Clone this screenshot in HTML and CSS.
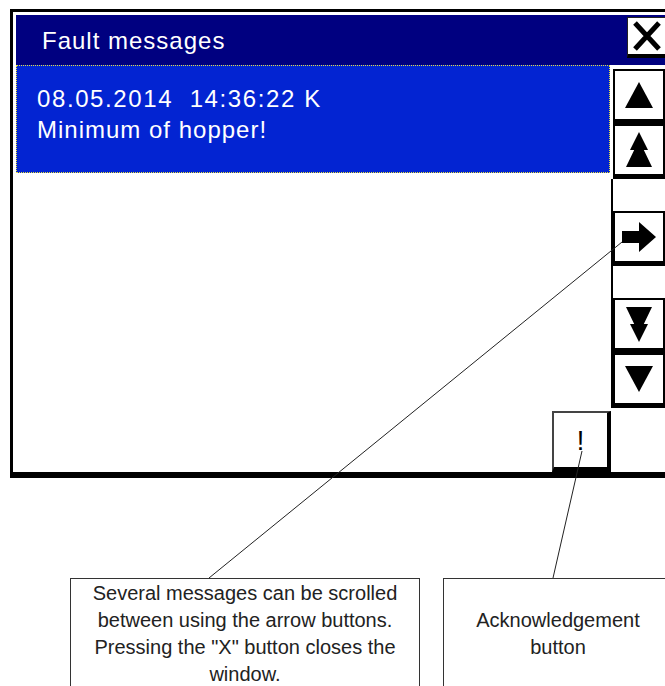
FILE: index.html
```html
<!DOCTYPE html>
<html lang="en">
<head>
    <meta charset="UTF-8">
    <title>Fault messages</title>
    <link rel="stylesheet" href="styles.css">
</head>
<body>
    <div class="screen">
        <div class="titlebar">
            <span class="title">Fault messages</span>
            <div class="close">
                <svg width="28" height="30" viewBox="0 0 28 30"><path d="M2 2 L26 28 M26 2 L2 28" stroke="#000" stroke-width="5" fill="none"/></svg>
            </div>
        </div>
        <div class="panel">
            <div class="list">
                <div class="msg">
                    <div class="stamp">08.05.2014&nbsp;&nbsp;14:36:22 K</div>
                    <div>Minimum of hopper!</div>
                </div>
                <div class="ack">!</div>
            </div>
            <div class="side">
                <!-- page up / scroll up -->
                <div class="key">
                    <svg width="28" height="26" viewBox="0 0 28 26"><path d="M14 0 L28 26 L0 26 Z"/></svg>
                </div>
                <div class="key">
                    <svg width="26" height="36" viewBox="0 0 26 36"><path d="M13 0 L22 18 L4 18 Z M13 8 L26 35 L0 35 Z"/></svg>
                </div>
                <div class="rail">
                    <div class="gap"></div>
                    <div class="key">
                        <svg width="34" height="30" viewBox="0 0 34 30"><path d="M0 9 H18 V21 H0 Z M17 0 L34 15 L17 30 Z"/></svg>
                    </div>
                    <div class="gap"></div>
                    <div class="key">
                        <svg width="26" height="36" viewBox="0 0 26 36"><path d="M13 36 L22 18 L4 18 Z M13 28 L26 1 L0 1 Z"/></svg>
                    </div>
                    <div class="key">
                        <svg width="28" height="26" viewBox="0 0 28 26"><path d="M14 26 L28 0 L0 0 Z"/></svg>
                    </div>
                </div>
            </div>
        </div>
    </div>

    <div class="notes">
        <div class="note note-left">Several messages can be scrolled<br>between using the arrow buttons.<br>Pressing the "X" button closes the<br>window.</div>
        <div class="note note-right"><div>Acknowledgement<br>button</div></div>
    </div>

    <!-- leader lines from the notes to the buttons -->
    <svg class="leaders" width="665" height="686" viewBox="0 0 665 686">
        <line x1="622" y1="242" x2="209" y2="578" stroke="#222" stroke-width="1"/>
        <line x1="582" y1="451" x2="553" y2="578" stroke="#222" stroke-width="1"/>
    </svg>
</body>
</html>
```

FILE: styles.css
```css
/* HMI window mock-up */
body {
    margin: 0;
    height: 686px;
    overflow: hidden;
    position: relative;
    background: #fff;
    font-family: "Liberation Sans", Arial, sans-serif;
    color: #222;
}

.screen {
    box-sizing: border-box;
    width: 655px;
    margin: 9px 0 0 10px;
    border: 3px solid #000;
    border-right: none;
    border-bottom-width: 6px;
    padding: 3px 0 0 3px;
    background: #fff;
}

.titlebar {
    height: 50px;
    background: #000080;
    display: flex;
    justify-content: space-between;
    align-items: flex-start;
}

.title {
    color: #fff;
    font-size: 24px;
    letter-spacing: 1px;
    line-height: 50px;
    padding: 1px 0 0 26px;
}

.close {
    box-sizing: border-box;
    width: 38px;
    height: 41px;
    margin-top: 2px;
    background: #fff;
    border-left: 1px solid #222;
    border-top: 1px solid #222;
    border-bottom: 4px solid #000;
    display: flex;
    align-items: center;
    justify-content: center;
}

.panel {
    display: flex;
    height: 407px;
}

.list {
    width: 595px;
    display: flex;
    flex-direction: column;
    justify-content: space-between;
    align-items: flex-end;
}

.msg {
    box-sizing: border-box;
    align-self: flex-start;
    width: 594px;
    height: 108px;
    background: #0324d2;
    border: 1px dotted #e8e23a;
    color: #fff;
    font-size: 24px;
    line-height: 31px;
    letter-spacing: 1px;
    padding: 17px 0 0 20px;
}

.stamp {
    letter-spacing: 1.6px;
}

.ack {
    box-sizing: border-box;
    width: 59px;
    height: 61px;
    background: #fff;
    border: 2px solid #444;
    border-right: 4px solid #000;
    border-bottom: 5px solid #000;
    text-align: center;
    font-size: 27px;
    line-height: 27px;
    padding-top: 15px;
    color: #000;
}

.side {
    box-sizing: border-box;
    width: 54px;
    padding-top: 4px;
}

.key {
    box-sizing: border-box;
    height: 55px;
    margin-left: 2px;
    background: #fff;
    border: 2px solid #000;
    border-bottom-width: 5px;
    display: flex;
    align-items: center;
    justify-content: center;
}

.rail {
    border-left: 2px solid #000;
}

.rail .key {
    margin-left: 0;
}

.gap {
    height: 32px;
}

.notes {
    display: flex;
    margin-top: 100px;
    padding-left: 70px;
    gap: 23px;
}

.note {
    box-sizing: border-box;
    flex-shrink: 0;
    border: 1px solid #333;
    font-size: 20px;
    line-height: 27px;
    text-align: center;
    padding: 1px 0;
}

.note-left {
    width: 350px;
}

.note-right {
    width: 230px;
    display: flex;
    align-items: center;
    justify-content: center;
}

.leaders {
    position: absolute;
    left: 0;
    top: 0;
    pointer-events: none;
}
```
